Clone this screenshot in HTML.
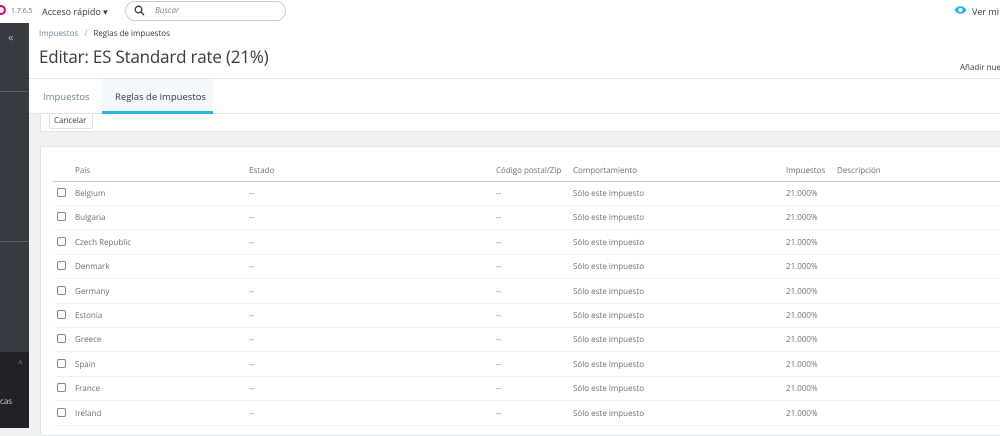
<!DOCTYPE html>
<html><head><meta charset="utf-8"><style>
*{margin:0;padding:0;box-sizing:border-box}
body{width:1000px;height:428px;overflow:hidden;background:#eff1f2;font-family:"Open Sans","Liberation Sans",sans-serif;color:#363a41;position:relative}
.abs{position:absolute}
.hdr{left:0;top:0;width:1000px;height:23px;background:#fff}
.side{left:0;top:23px;width:29px;height:405px;background:#363a41}
.side2{left:0;top:352px;width:29px;height:76px;background:#202226}
.head{left:29px;top:23px;width:971px;height:56px;background:#fff;border-bottom:1px solid #dfe3e5}
.tabs{left:29px;top:79px;width:971px;height:35px;background:#fff;border-bottom:1px solid #dfe3e5}
.panel{left:40px;top:146px;width:970px;height:290px;background:#fff;border:1px solid #dfe3e5;border-radius:3px}
.t{position:absolute;font-size:8px;color:#6c7073;white-space:nowrap}
.row{position:absolute;left:55px;width:945px;height:1px;background:#eee}
.cb{position:absolute;left:57px;width:9px;height:9px;border:1px solid #888;border-radius:2px}
</style></head><body>
<div class="abs hdr"></div>
<div class="abs" style="left:-4px;top:5px;width:10px;height:10px;border:2.5px solid #df0067;border-radius:50%"></div>
<div class="t" style="left:11px;top:7px;font-size:7px">1.7.6.5</div>
<div class="t" style="left:42px;top:5px;font-size:9px;color:#363a41">Acceso rápido ▾</div>
<div class="abs" style="left:125px;top:1px;width:161px;height:20px;border:1px solid #c5ced3;border-radius:10px"></div>
<svg class="abs" style="left:134px;top:5px" width="11" height="11" viewBox="0 0 11 11"><circle cx="4.5" cy="4.5" r="3.3" fill="none" stroke="#363a41" stroke-width="1.3"/><path d="M7 7l3 3" stroke="#363a41" stroke-width="1.5"/></svg>
<div class="t" style="left:155px;top:5px;font-size:8px;font-style:italic;color:#6c868e">Buscar</div>
<svg class="abs" style="left:954px;top:5px" width="13" height="10" viewBox="0 0 13 10"><path d="M0.5 5C3 0 10 0 12.5 5C10 10 3 10 0.5 5z" fill="#25b9d7"/><circle cx="6.5" cy="5" r="2" fill="#fff"/></svg>
<div class="t" style="left:972px;top:5px;font-size:9px;color:#363a41">Ver mi t</div>
<div class="abs side"></div>
<div class="abs side2"></div>
<div class="abs" style="left:0;top:91px;width:29px;height:1px;background:#5a5e64"></div>
<div class="abs" style="left:0;top:241px;width:29px;height:1px;background:#5a5e64"></div>
<div class="t" style="left:8px;top:30px;color:#bbb;font-size:11px">«</div>
<div class="t" style="left:18px;top:358px;color:#999;font-size:8px">^</div>
<div class="t" style="left:0;top:396px;color:#ddd;font-size:8px">cas</div>
<div class="abs head"></div>
<div class="t" style="left:39px;top:28px;font-size:8px;color:#6c868e">Impuestos <span style="color:#999;margin:0 4px">/</span> <span style="color:#363a41">Reglas de impuestos</span></div>
<div class="t" style="left:39px;top:45px;font-size:17px;color:#363a41;letter-spacing:-0.2px">Editar: ES Standard rate (21%)</div>
<div class="t" style="left:960px;top:62px;font-size:8px;color:#363a41">Añadir nue</div>
<div class="abs tabs"></div>
<div class="abs" style="left:102px;top:79px;width:111px;height:34px;background:#f4f8fb"></div>
<div class="abs" style="left:102px;top:111px;width:111px;height:3px;background:#25b9d7"></div>
<div class="t" style="left:43px;top:90px;font-size:9.5px;color:#6c868e">Impuestos</div>
<div class="t" style="left:115px;top:90px;font-size:9.5px;color:#363a41">Reglas de impuestos</div>
<div class="abs" style="left:40px;top:114px;width:970px;height:18px;background:#fff;border:1px solid #dfe3e5;border-top:none"></div>
<div class="abs" style="left:49px;top:113px;width:44px;height:16px;border:1px solid #dfe3e5;border-radius:2px;background:#fff"></div>
<div class="t" style="left:54px;top:115px;font-size:8px;color:#363a41">Cancelar</div>
<div class="abs panel"></div>
<div class="t" style="left:75px;top:165px">País</div>
<div class="t" style="left:249px;top:165px">Estado</div>
<div class="t" style="left:496px;top:165px">Código postal/Zip</div>
<div class="t" style="left:573px;top:165px">Comportamiento</div>
<div class="t" style="left:786px;top:165px">Impuestos</div>
<div class="t" style="left:837px;top:165px">Descripción</div>
<div class="abs" style="left:53px;top:181px;width:947px;height:1px;background:#bbcdd6"></div>
<div id="rows"></div>
<script>
var c=["Belgium","Bulgaria","Czech Republic","Denmark","Germany","Estonia","Greece","Spain","France","Ireland"],h="";
for(var i=0;i<10;i++){var y=188+i*24.4;
h+='<div class="cb" style="top:'+(y)+'px"></div><div class="t" style="left:75px;top:'+y+'px">'+c[i]+'</div><div class="t" style="left:249px;top:'+y+'px">--</div><div class="t" style="left:496px;top:'+y+'px">--</div><div class="t" style="left:573px;top:'+y+'px">Sólo este impuesto</div><div class="t" style="left:786px;top:'+y+'px">21.000%</div><div class="row" style="top:'+(y+17)+'px"></div>';}
document.getElementById("rows").innerHTML=h;
</script>
</body></html>
